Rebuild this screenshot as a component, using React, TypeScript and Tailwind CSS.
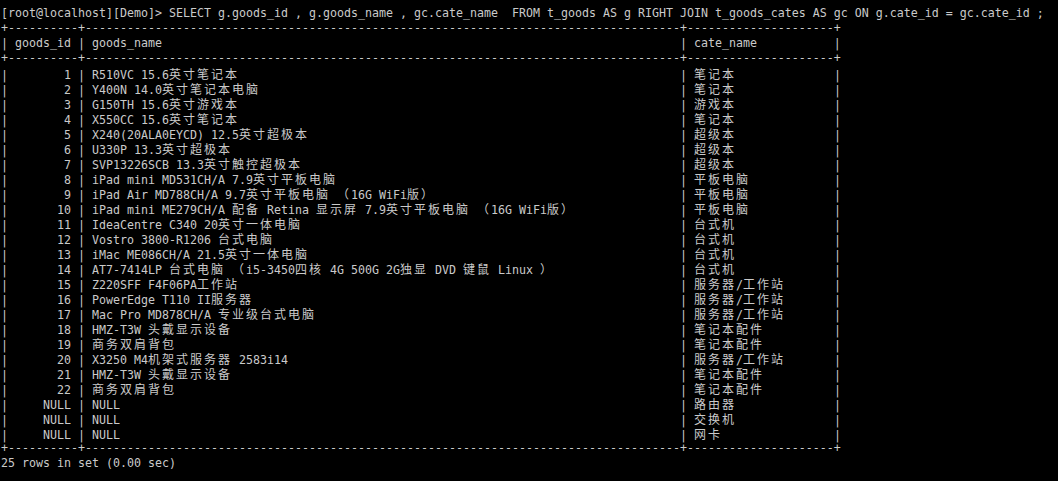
const rows: [string, string, string][] = [
  ["1", "R510VC 15.6英寸笔记本", "笔记本"],
  ["2", "Y400N 14.0英寸笔记本电脑", "笔记本"],
  ["3", "G150TH 15.6英寸游戏本", "游戏本"],
  ["4", "X550CC 15.6英寸笔记本", "笔记本"],
  ["5", "X240(20ALA0EYCD) 12.5英寸超极本", "超级本"],
  ["6", "U330P 13.3英寸超极本", "超级本"],
  ["7", "SVP13226SCB 13.3英寸触控超极本", "超级本"],
  ["8", "iPad mini MD531CH/A 7.9英寸平板电脑", "平板电脑"],
  ["9", "iPad Air MD788CH/A 9.7英寸平板电脑 （16G WiFi版）", "平板电脑"],
  ["10", "iPad mini ME279CH/A 配备 Retina 显示屏 7.9英寸平板电脑 （16G WiFi版）", "平板电脑"],
  ["11", "IdeaCentre C340 20英寸一体电脑", "台式机"],
  ["12", "Vostro 3800-R1206 台式电脑", "台式机"],
  ["13", "iMac ME086CH/A 21.5英寸一体电脑", "台式机"],
  ["14", "AT7-7414LP 台式电脑 （i5-3450四核 4G 500G 2G独显 DVD 键鼠 Linux ）", "台式机"],
  ["15", "Z220SFF F4F06PA工作站", "服务器/工作站"],
  ["16", "PowerEdge T110 II服务器", "服务器/工作站"],
  ["17", "Mac Pro MD878CH/A 专业级台式电脑", "服务器/工作站"],
  ["18", "HMZ-T3W 头戴显示设备", "笔记本配件"],
  ["19", "商务双肩背包", "笔记本配件"],
  ["20", "X3250 M4机架式服务器 2583i14", "服务器/工作站"],
  ["21", "HMZ-T3W 头戴显示设备", "笔记本配件"],
  ["22", "商务双肩背包", "笔记本配件"],
  ["NULL", "NULL", "路由器"],
  ["NULL", "NULL", "交换机"],
  ["NULL", "NULL", "网卡"],
]

const WIDE = /[\u3000-\u9fff\uff00-\uffef]/

// terminal cells: CJK takes two
const cells = (s: string) => [...s].reduce((n, c) => n + (WIDE.test(c) ? 2 : 1), 0)
const padR = (s: string, w: number) => s + " ".repeat(Math.max(0, w - cells(s)))
const padL = (s: string, w: number) => " ".repeat(Math.max(0, w - cells(s))) + s

const border = "+" + "-".repeat(10) + "+" + "-".repeat(85) + "+" + "-".repeat(21) + "+"

const tableLine = (id: string, name: string, cate: string) =>
  "| " + id + " | " + padR(name, 83) + " | " + padR(cate, 19) + " |"

// split into runs so wide chars get a 2-cell box
function TermText({ text }: { text: string }) {
  const parts: { wide: boolean; s: string }[] = []
  for (const c of text) {
    const wide = WIDE.test(c)
    const last = parts[parts.length - 1]
    if (last && last.wide === wide) last.s += c
    else parts.push({ wide, s: c })
  }
  return (
    <>
      {parts.map((p, i) =>
        p.wide ? (
          <span
            key={i}
            className="text-[12px] tracking-[2px] font-['Noto_Sans_CJK_SC',sans-serif]"
          >
            {p.s}
          </span>
        ) : (
          <span key={i}>{p.s}</span>
        )
      )}
    </>
  )
}

export default function App() {
  const lines = [
    "[root@localhost][Demo]> SELECT g.goods_id , g.goods_name , gc.cate_name  FROM t_goods AS g RIGHT JOIN t_goods_cates AS gc ON g.cate_id = gc.cate_id ;",
    border,
    tableLine(padR("goods_id", 8), "goods_name", "cate_name"),
    border,
    ...rows.map(([id, name, cate]) => tableLine(padL(id, 8), name, cate)),
    border,
    "25 rows in set (0.00 sec)",
  ]

  return (
    <div className="w-full h-screen overflow-hidden bg-black text-[#cacaca] pt-[6px] pl-[1px] font-['DejaVu_Sans_Mono','Noto_Sans_CJK_SC',monospace] text-[11.63px]">
      {lines.map((l, i) => (
        <div key={i} className="h-[15px] leading-[15px] whitespace-pre">
          <TermText text={l} />
        </div>
      ))}
    </div>
  )
}
